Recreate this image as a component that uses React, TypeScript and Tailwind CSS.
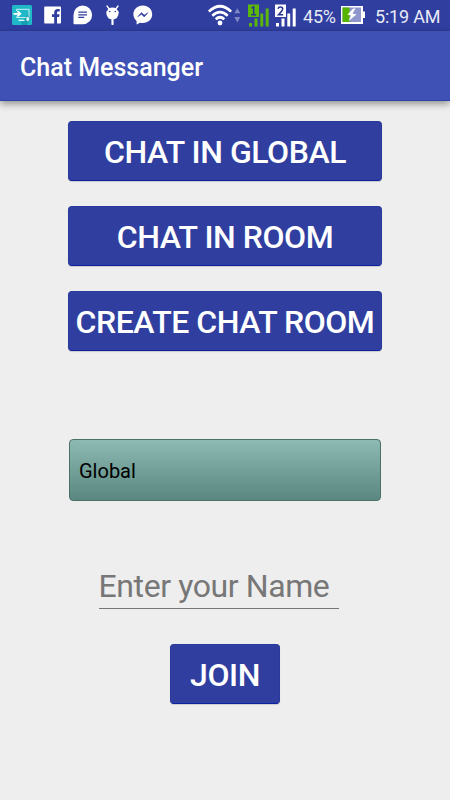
import React from "react";

function ShareIcon() {
  return (
    <svg className="ml-3 h-5 w-5 shrink-0" viewBox="0 0 20 20">
      <rect width="20" height="20" rx="1.5" fill="#20b9c8" />
      <path d="M9 17L17.500 8V14.500L15 20H10Z" fill="#169fb1" />
      <path d="M4.500 6V4.300H17V12.500H4.500V11.500" fill="none" stroke="#c8f1f2" strokeWidth="1" />
      <path d="M1.500 8.800H7M5.500 6.200L8.300 8.800L5.500 11.400" fill="none" stroke="#fff" strokeWidth="1.800" />
      <path d="M6.500 15.300H12.500" stroke="#e8ffff" strokeWidth="1.300" />
      <rect x="14" y="11.500" width="3.500" height="5" rx="1.700" fill="#d8f6f6" stroke="#168fa4" strokeWidth=".6" />
    </svg>
  );
}

function FacebookIcon() {
  return (
    <svg className="ml-3 h-[18px] w-[18px] shrink-0" viewBox="0 0 18 18">
      <path
        fill="#fff"
        d="M1 .5H16.200Q17 .5 17 1.300V16.700Q17 17.500 16.200 17.500H13V11H15.200L15.500 8.300H13V6.800C13 5.900 13.300 5.500 14.400 5.500H15.700V3.100C15.200 3 14.500 2.900 13.700 2.900C11.500 2.900 10.200 4.200 10.200 6.400V8.300H8V11H10.200V17.500H1Q.2 17.500 .2 16.700V1.300Q.2 .5 1 .5Z"
      />
    </svg>
  );
}

function MessageIcon() {
  return (
    <svg className="ml-[11px] h-5 w-5 shrink-0" viewBox="0 0 20 20">
      <path d="M9.700 .5A9.400 9.400 0 1 1 9.700 19.300H1.500Q.5 19.300 .5 18.300V10A9.300 9.400 0 0 1 9.700 .5Z" fill="#fff" />
      <path d="M5.300 7.200H14M5.300 9.800H14M5.300 12.400H11.200" stroke="#303f9f" strokeWidth="1.200" />
    </svg>
  );
}

function AndroidIcon() {
  return (
    <svg className="ml-3 h-5 w-4 shrink-0" viewBox="0 0 16 20">
      <path d="M2 1L4.200 4M13 1L10.800 4" stroke="#fff" strokeWidth="1.300" strokeLinecap="round" />
      <path d="M4 3.200Q7.500 2 11 3.200L13.800 7Q13.400 14.500 7.500 14.500T1.200 7Z" fill="#fff" />
      <path d="M7.500 13V19" stroke="#fff" strokeWidth="2.200" strokeLinecap="round" />
      <circle cx="4.700" cy="6.500" r=".8" fill="#303f9f" />
      <circle cx="10.300" cy="6.500" r=".8" fill="#303f9f" />
    </svg>
  );
}

function MessengerIcon() {
  return (
    <svg className="ml-[12px] h-5 w-5 shrink-0" viewBox="0 0 20 20">
      <path d="M9.800 .5C4.500 .5 .4 4.300 .4 9.300C.4 12.100 1.600 14.400 3.600 16V19.600L7 17.700C7.900 18 8.800 18.100 9.800 18.100C15.100 18.100 19.200 14.200 19.200 9.300C19.200 4.300 15.100 .5 9.800 .5Z" fill="#fff" />
      <path d="M4.700 11.700L8.500 7.500L11.200 10.100L15 7.700L11.200 12L8.500 9.300Z" fill="#303f9f" stroke="#303f9f" strokeWidth=".5" />
    </svg>
  );
}

function WifiIcon() {
  return (
    <svg className="h-[22px] w-[34px] shrink-0" viewBox="0 0 34 22">
      <g fill="none" stroke="#fff" strokeWidth="2.700">
        <path d="M.9 7.600Q12 -3.200 23.100 7.600" />
        <path d="M4.300 11.700Q12 4.400 19.700 11.700" />
        <path d="M7.700 15.300Q12 11.200 16.300 15.300" />
      </g>
      <circle cx="12" cy="19" r="2.400" fill="#fff" />
      <path d="M26.300 9.200L29.300 4.200L32.300 9.200ZM26.300 13L29.300 18.500L32.300 13Z" fill="#7f88c4" />
    </svg>
  );
}

function SignalIcon({ sim, color }: { sim: string; color: string }) {
  return (
    <svg className="h-6 w-[22px] shrink-0" viewBox="0 0 22 24">
      <path d="M0 .5H11V13H0Z" fill={color} />
      <path
        d={sim === "1" ? "M3.500 4L5.700 2.900V11M3.300 10.700H8.100" : "M3.100 4.900Q3.300 3.100 5.400 3.100Q7.700 3.100 7.700 5Q7.700 6.400 3.500 10.700H8.200"}
        fill="none"
        stroke="#263492"
        strokeWidth="1.500"
      />
      <path d="M1 19H4V22.500H1ZM6.500 14.500H9.500V22.500H6.500ZM12.300 9.500H15.200V22.500H12.300ZM17.700 4.500H20.700V22.500H17.700Z" fill={color} />
    </svg>
  );
}

function BatteryIcon() {
  return (
    <svg className="ml-[5px] h-[18px] w-6 shrink-0" viewBox="0 0 24 18">
      <path d="M0 0H22V5.500H24V12H22V18H0Z" fill="#fff" />
      <path d="M1.500 1.500H20V16H1.500Z" fill="#8e96cb" />
      <path d="M1.500 1.500H8.500V16H1.500Z" fill="#55b400" />
      <path d="M12.300 2.500L6.500 8.500L10 9.500L7.500 15L15.500 8.500L11.500 7.500L14.500 2.500Z" fill="#fff" />
    </svg>
  );
}

function RaisedButton({ children, className }: { children: React.ReactNode; className: string }) {
  return (
    <button
      className={`flex h-[60px] items-center justify-center rounded-[4px] border border-[#2a3a9c] border-b-[#0c20a0] bg-[#303f9f] pt-[2px] text-[32px] leading-none font-medium tracking-[-0.45px] whitespace-nowrap text-white shadow-[0_1px_1px_rgba(0,0,0,0.15)] ${className}`}
    >
      {children}
    </button>
  );
}

export default function App() {
  return (
    <div className="flex h-[800px] w-[450px] flex-col overflow-hidden bg-[#eeeeee] font-[Roboto,sans-serif]">
      <header className="flex h-[31px] shrink-0 items-center border-b border-[#2c3b96] bg-[#303f9f] text-white">
        <ShareIcon />
        <FacebookIcon />
        <MessageIcon />
        <AndroidIcon />
        <MessengerIcon />
        <div className="ml-[55px] flex items-center">
          <WifiIcon />
          <div className="ml-[6px] flex gap-[5px] pt-px">
            <SignalIcon sim="1" color="#5bb80b" />
            <SignalIcon sim="2" color="#ffffff" />
          </div>
        </div>
        <span className="ml-[6px] w-[33px] pt-[3px] text-[18px] leading-none tracking-[-0.2px] text-[#e8eaf6]">45%</span>
        <BatteryIcon />
        <span className="ml-[10px] pt-[3px] text-[18px] leading-none tracking-[-0.2px] whitespace-nowrap text-[#e8eaf6]">5:19 AM</span>
      </header>
      <div className="flex h-[70px] shrink-0 items-center border-b border-[#3040a8] bg-[#3f51b5] pt-1 pl-5 shadow-[0_3px_7px_rgba(0,0,0,0.38)]">
        <h1 className="text-[25px] leading-none font-medium text-white">Chat Messanger</h1>
      </div>
      <main className="flex flex-col items-center pt-5">
        <div className="flex flex-col gap-[25px]">
          <RaisedButton className="w-[314px]">CHAT IN GLOBAL</RaisedButton>
          <RaisedButton className="w-[314px]">CHAT IN ROOM</RaisedButton>
          <RaisedButton className="w-[314px]">CREATE CHAT ROOM</RaisedButton>
        </div>
        <div className="mt-[88px] flex h-[62px] w-[312px] items-center rounded-[4px] border border-[#4c7069] bg-linear-to-b from-[#8dbab3] to-[#5a8780] pt-px pl-[9px] text-[20px] text-black">
          Global
        </div>
        <input
          placeholder="Enter your Name"
          className="mt-[63px] mr-[13px] h-[45px] w-[240px] border-b border-[#777777] text-[32px] leading-none tracking-[-0.4px] outline-none placeholder:text-[#777777] placeholder:opacity-100"
        />
        <RaisedButton className="mt-[35px] w-[110px]">JOIN</RaisedButton>
      </main>
    </div>
  );
}
